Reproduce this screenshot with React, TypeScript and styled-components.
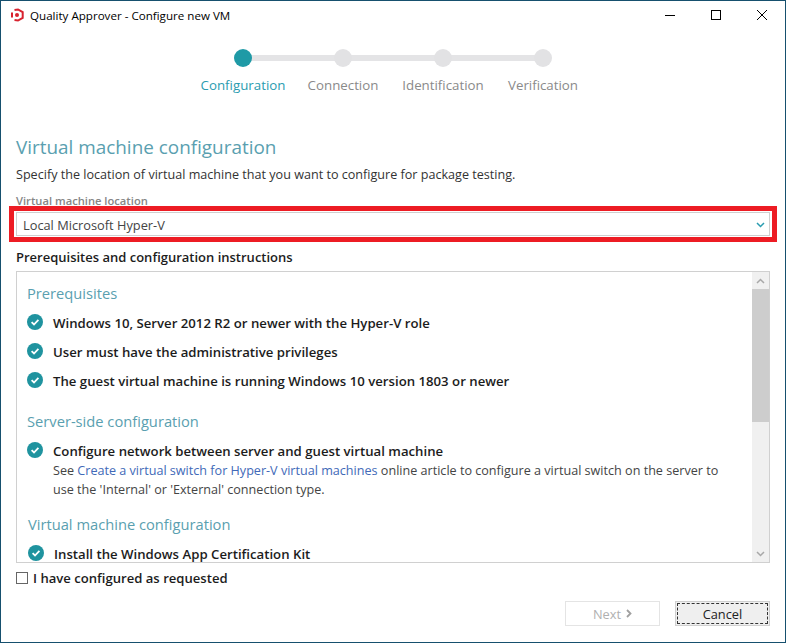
import styled, { createGlobalStyle } from 'styled-components';

const GlobalStyle = createGlobalStyle`
  html, body { margin: 0; padding: 0; background: #fff; }
  * { box-sizing: border-box; }
`;

const Window = styled.div`
  width: 786px;
  height: 643px;
  display: flex;
  flex-direction: column;
  border: 1px solid #16506e;
  background: #fff;
  color: #1c1c1c;
  font-family: "Open Sans", "Noto Sans", sans-serif;
  font-size: 13px;
  overflow: hidden;
`;

const TitleBar = styled.div`
  height: 30px;
  display: flex;
  align-items: center;
  padding: 0 0 2px 9px;
  flex: none;
`;

const AppTitle = styled.span`
  margin-left: 6px;
  font-size: 11.6px;
  color: #000;
`;

const WindowButtons = styled.div`
  margin-left: auto;
  display: flex;
`;

const WindowButton = styled.div`
  width: 46px;
  height: 28px;
  display: flex;
  align-items: center;
  justify-content: center;
`;

const Stepper = styled.div`
  display: flex;
  justify-content: center;
  padding-top: 18px;
  flex: none;
`;

const Step = styled.div`
  width: 100px;
  position: relative;
  display: flex;
  flex-direction: column;
  align-items: center;
  gap: 8px;
`;

const Connector = styled.div`
  position: absolute;
  left: 50%;
  top: 6px;
  width: 100px;
  height: 6px;
  background: #e4e4e6;
`;

const Dot = styled.div<{ $active?: boolean }>`
  width: 18px;
  height: 18px;
  border-radius: 50%;
  position: relative;
  z-index: 1;
  background: ${p => (p.$active ? '#1f9aa6' : '#e2e2e4')};
`;

const StepLabel = styled.div<{ $active?: boolean }>`
  font-size: 13.3px;
  line-height: 20px;
  white-space: nowrap;
  color: ${p => (p.$active ? '#2a9cb0' : '#8a8a8a')};
`;

const Content = styled.div`
  flex: 1;
  padding: 0 15px;
  display: flex;
  flex-direction: column;
  min-height: 0;
`;

const Heading = styled.h1`
  margin: 39px 0 0;
  font-size: 18.9px;
  line-height: 26px;
  font-weight: 400;
  color: #5a9fb0;
`;

const Intro = styled.p`
  margin: 6px 0 0;
  font-size: 12.6px;
  line-height: 18px;
  color: #333;
`;

const FieldLabel = styled.div`
  margin-top: 9px;
  font-size: 11.2px;
  line-height: 15px;
  font-weight: 600;
  color: #858585;
`;

const SelectWrap = styled.div`
  position: relative;
  margin-top: 4px;
  width: 754px;
  flex: none;
`;

const Select = styled.div`
  height: 24px;
  display: flex;
  align-items: center;
  justify-content: space-between;
  padding: 1px 4px 0 6px;
  border: 1px solid #cfcfcf;
  font-size: 12.8px;
  color: #444;
`;

const Highlight = styled.div`
  position: absolute;
  inset: -6px -7px;
  border: 5px solid #ed1c24;
  pointer-events: none;
`;

const SectionLabel = styled.div`
  margin-top: 12px;
  font-size: 13px;
  line-height: 18px;
  font-weight: 600;
  color: #1c1c1c;
`;

const Panel = styled.div`
  margin-top: 5px;
  width: 754px;
  height: 292px;
  flex: none;
  display: flex;
  border: 1px solid #d0d0d0;
`;

const PanelBody = styled.div`
  flex: 1;
  min-width: 0;
  overflow: hidden;
  padding: 11px 20px 0 10px;
`;

const Scrollbar = styled.div`
  width: 17px;
  flex: none;
  display: flex;
  flex-direction: column;
  background: #f0f0f0;
`;

const ScrollArrow = styled.div`
  height: 17px;
  flex: none;
  display: flex;
  align-items: center;
  justify-content: center;
`;

const ScrollTrack = styled.div`
  flex: 1;
`;

const ScrollThumb = styled.div`
  height: 133px;
  background: #cdcdcd;
`;

const PanelTitle = styled.h2`
  margin: 0;
  font-size: 14.7px;
  line-height: 21px;
  font-weight: 400;
  color: #5a9fb0;
`;

const Item = styled.div`
  display: flex;
  gap: 10px;
  margin-top: 9px;
  align-items: flex-start;
`;

const Section = styled.section<{ $last?: boolean }>`
  margin-top: ${p => (p.$last ? '15px' : '20px')};
  padding-left: ${p => (p.$last ? '1px' : '0')};
  &:first-child { margin-top: 0; }
`;

const ItemText = styled.div`
  padding-top: 1px;
  min-height: 20px;
`;

const ItemTitle = styled.div`
  font-size: 13.2px;
  line-height: 18px;
  font-weight: 600;
  color: #1c1c1c;
`;

const ItemNote = styled.div`
  margin-top: 1px;
  font-size: 12.6px;
  line-height: 19px;
  color: #444;
`;

const Link = styled.a`
  color: #4169b8;
`;

const ConfirmRow = styled.label`
  margin-top: 6px;
  display: flex;
  align-items: center;
  gap: 5px;
  font-size: 13.1px;
  line-height: 18px;
  font-weight: 600;
  color: #1c1c1c;
`;

const CheckBox = styled.span`
  width: 12px;
  height: 12px;
  border: 1px solid #666;
`;

const Footer = styled.div`
  margin-top: 14px;
  width: 754px;
  display: flex;
  justify-content: flex-end;
  gap: 15px;
`;

const Button = styled.div<{ $disabled?: boolean }>`
  width: 95px;
  height: 25px;
  display: flex;
  align-items: center;
  justify-content: center;
  gap: 5px;
  font-size: 12.8px;
  color: ${p => (p.$disabled ? '#b0b0b0' : '#222')};
  background: ${p => (p.$disabled ? '#fff' : '#efefef')};
  border: 1px solid ${p => (p.$disabled ? '#e4e4e4' : '#cfcfcf')};
`;

const FocusRing = styled.span`
  width: 91px;
  height: 21px;
  display: flex;
  align-items: center;
  justify-content: center;
  border: 1px dashed #333;
`;

const Logo = () => (
  <svg width="14" height="14" viewBox="0 0 14 14">
    <path d="M4.5 2 8 1.5l4.7 2.7v5.6L8 12.5 4.5 12" fill="none" stroke="#d8232f" strokeWidth="2" />
    <path d="M2 4.6v4.8" stroke="#d8232f" strokeWidth="2" />
    <circle cx="7" cy="7" r="2" fill="#d8232f" />
  </svg>
);

const CheckIcon = () => (
  <svg width="16" height="16" viewBox="0 0 16 16" style={{ flex: 'none', marginTop: 1 }}>
    <circle cx="8" cy="8" r="8" fill="#1f939f" />
    <path d="M4.6 8.2 7 10.5 11.4 5.8" fill="none" stroke="#fff" strokeWidth="1.8" />
  </svg>
);

const Chevron = ({ up, color }: { up?: boolean; color: string }) => (
  <svg width={9} height={6} viewBox="0 0 9 6">
    <path d={up ? 'M1 5 4.5 1.5 8 5' : 'M1 1 4.5 4.5 8 1'} fill="none" stroke={color} strokeWidth="1.5" />
  </svg>
);

const NextArrow = () => (
  <svg width={6} height={9} viewBox="0 0 6 9">
    <path d="M1 1 4.5 4.5 1 8" fill="none" stroke="#a0a0a0" strokeWidth="1.8" />
  </svg>
);

const steps = ['Configuration', 'Connection', 'Identification', 'Verification'];

function App() {
  return (
    <>
      <GlobalStyle />
      <Window>
        <TitleBar>
          <Logo />
          <AppTitle>Quality Approver - Configure new VM</AppTitle>
          <WindowButtons>
            <WindowButton>
              <svg width="10" height="10" viewBox="0 0 10 10"><path d="M0 5.5h10" stroke="#000" /></svg>
            </WindowButton>
            <WindowButton>
              <svg width="10" height="10" viewBox="0 0 10 10"><rect x=".5" y=".5" width="9" height="9" fill="none" stroke="#000" /></svg>
            </WindowButton>
            <WindowButton>
              <svg width="10" height="10" viewBox="0 0 10 10"><path d="M0 0l10 10M10 0 0 10" stroke="#000" /></svg>
            </WindowButton>
          </WindowButtons>
        </TitleBar>

        <Stepper>
          {steps.map((s, i) => (
            <Step key={s}>
              {i < steps.length - 1 && <Connector />}
              <Dot $active={i === 0} />
              <StepLabel $active={i === 0}>{s}</StepLabel>
            </Step>
          ))}
        </Stepper>

        <Content>
          <Heading>Virtual machine configuration</Heading>
          <Intro>Specify the location of virtual machine that you want to configure for package testing.</Intro>
          <FieldLabel>Virtual machine location</FieldLabel>
          <SelectWrap>
            <Select>
              <span>Local Microsoft Hyper-V</span>
              <Chevron color="#2a9cb0" />
            </Select>
            <Highlight />
          </SelectWrap>
          <SectionLabel>Prerequisites and configuration instructions</SectionLabel>
          <Panel>
            <PanelBody>
              <Section>
                <PanelTitle>Prerequisites</PanelTitle>
                <Item><CheckIcon /><ItemText><ItemTitle>Windows 10, Server 2012 R2 or newer with the Hyper-V role</ItemTitle></ItemText></Item>
                <Item><CheckIcon /><ItemText><ItemTitle>User must have the administrative privileges</ItemTitle></ItemText></Item>
                <Item><CheckIcon /><ItemText><ItemTitle>The guest virtual machine is running Windows 10 version 1803 or newer</ItemTitle></ItemText></Item>
              </Section>
              <Section>
                <PanelTitle>Server-side configuration</PanelTitle>
                <Item>
                  <CheckIcon />
                  <ItemText>
                    <ItemTitle>Configure network between server and guest virtual machine</ItemTitle>
                    <ItemNote>
                      See <Link>Create a virtual switch for Hyper-V virtual machines</Link> online article to configure a virtual switch on the server to use the 'Internal' or 'External' connection type.
                    </ItemNote>
                  </ItemText>
                </Item>
              </Section>
              <Section $last>
                <PanelTitle>Virtual machine configuration</PanelTitle>
                <Item><CheckIcon /><ItemText><ItemTitle>Install the Windows App Certification Kit</ItemTitle></ItemText></Item>
              </Section>
            </PanelBody>
            <Scrollbar>
              <ScrollArrow><Chevron up color="#a8a8a8" /></ScrollArrow>
              <ScrollThumb />
              <ScrollTrack />
              <ScrollArrow><Chevron color="#a8a8a8" /></ScrollArrow>
            </Scrollbar>
          </Panel>
          <ConfirmRow><CheckBox />I have configured as requested</ConfirmRow>
          <Footer>
            <Button $disabled>Next <NextArrow /></Button>
            <Button><FocusRing>Cancel</FocusRing></Button>
          </Footer>
        </Content>
      </Window>
    </>
  );
}

export default App;
